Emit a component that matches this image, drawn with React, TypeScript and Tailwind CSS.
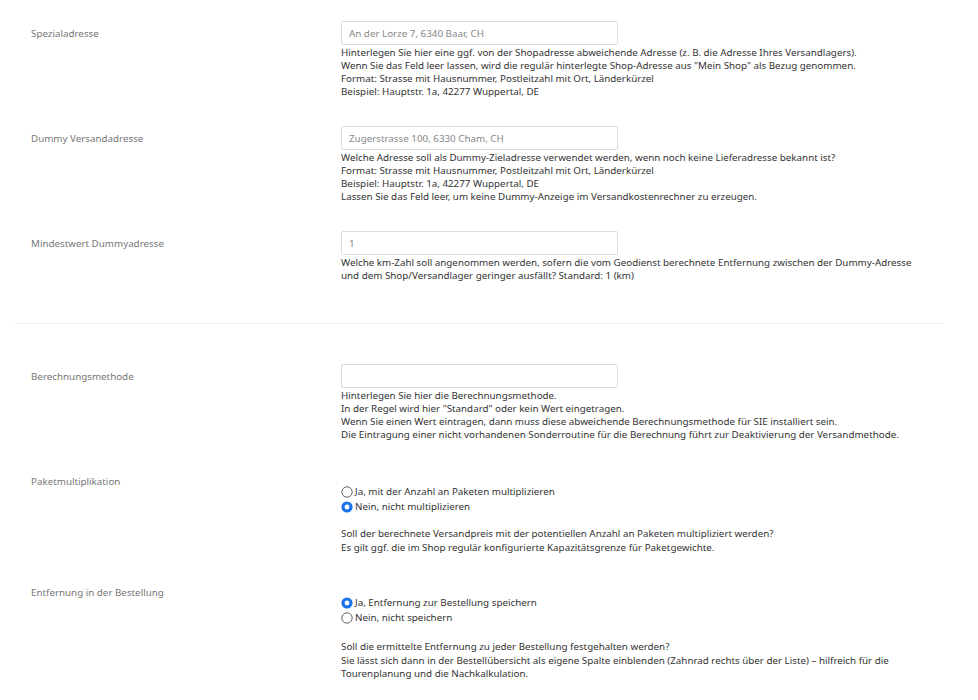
import React from "react";

const Radio = ({ checked }: { checked: boolean }) => (
  <span className="inline-flex w-[12px] h-[12px] shrink-0 items-center justify-center">
    {checked ? (
      <svg width="12" height="12" viewBox="0 0 12 12">
        <circle cx="6" cy="6" r="5.6" fill="#1a73e8" />
        <circle cx="6" cy="6" r="2.4" fill="#ffffff" />
      </svg>
    ) : (
      <svg width="12" height="12" viewBox="0 0 12 12">
        <circle cx="6" cy="6" r="5.2" fill="#ffffff" stroke="#555" strokeWidth="0.9" />
      </svg>
    )}
  </span>
);

const Desc = ({ lines }: { lines: string[] }) => (
  <>
    {lines.map((d, i) => (
      <div key={i}>{d}</div>
    ))}
  </>
);

const InputRow = ({ label, value, desc }: { label: string; value: string; desc: string[] }) => (
  <div className="flex">
    <div className="w-[341px] shrink-0 pl-[31px] h-[24px] flex items-center text-[#777]">{label}</div>
    <div className="flex flex-col">
      <div className="w-[277px] h-[24px] border border-[#dcdcdc] rounded-[2px] flex items-center px-[7px] text-[#888]">
        {value}
      </div>
      <div className="mt-[1px] text-[#333]">
        <Desc lines={desc} />
      </div>
    </div>
  </div>
);

const RadioRow = ({
  label,
  options,
  desc,
  descGap,
}: {
  label: string;
  options: { text: string; checked: boolean }[];
  desc: string[];
  descGap: "a" | "b";
}) => (
  <div className="flex">
    <div className="w-[341px] shrink-0 pl-[31px] h-[24px] flex items-center text-[#777]">{label}</div>
    <div className="flex flex-col pt-[15px] text-[#333]">
      {options.map((o, i) => (
        <div key={i} className="flex items-center gap-[2px] h-[15px]">
          <Radio checked={o.checked} />
          <span>{o.text}</span>
        </div>
      ))}
      <div className={descGap === "a" ? "mt-[13px] leading-[13.5px]" : "mt-[15px] leading-[13.5px]"}>
        <Desc lines={desc} />
      </div>
    </div>
  </div>
);

export default function App() {
  return (
    <div
      className="w-[978px] h-[700px] bg-white text-[9.8px] leading-[13px] overflow-hidden"
      style={{ fontFamily: '"Noto Sans", "Open Sans", sans-serif' }}
    >
      <div className="flex flex-col pt-[21px]">
        <InputRow
          label="Spezialadresse"
          value="An der Lorze 7, 6340 Baar, CH"
          desc={[
            "Hinterlegen Sie hier eine ggf. von der Shopadresse abweichende Adresse (z. B. die Adresse Ihres Versandlagers).",
            'Wenn Sie das Feld leer lassen, wird die regulär hinterlegte Shop-Adresse aus "Mein Shop" als Bezug genommen.',
            "Format: Strasse mit Hausnummer, Postleitzahl mit Ort, Länderkürzel",
            "Beispiel: Hauptstr. 1a, 42277 Wuppertal, DE",
          ]}
        />
        <div className="h-[28px]" />
        <InputRow
          label="Dummy Versandadresse"
          value="Zugerstrasse 100, 6330 Cham, CH"
          desc={[
            "Welche Adresse soll als Dummy-Zieladresse verwendet werden, wenn noch keine Lieferadresse bekannt ist?",
            "Format: Strasse mit Hausnummer, Postleitzahl mit Ort, Länderkürzel",
            "Beispiel: Hauptstr. 1a, 42277 Wuppertal, DE",
            "Lassen Sie das Feld leer, um keine Dummy-Anzeige im Versandkostenrechner zu erzeugen.",
          ]}
        />
        <div className="h-[28px]" />
        <InputRow
          label="Mindestwert Dummyadresse"
          value="1"
          desc={[
            "Welche km-Zahl soll angenommen werden, sofern die vom Geodienst berechnete Entfernung zwischen der Dummy-Adresse",
            "und dem Shop/Versandlager geringer ausfällt? Standard: 1 (km)",
          ]}
        />
        <div className="h-[41px]" />
        <div className="mx-[14px] w-[929px] h-px bg-[#f0f0f0]" />
        <div className="h-[40px]" />
        <InputRow
          label="Berechnungsmethode"
          value=""
          desc={[
            "Hinterlegen Sie hier die Berechnungsmethode.",
            'In der Regel wird hier "Standard" oder kein Wert eingetragen.',
            "Wenn Sie einen Wert eintragen, dann muss diese abweichende Berechnungsmethode für SIE installiert sein.",
            "Die Eintragung einer nicht vorhandenen Sonderroutine für die Berechnung führt zur Deaktivierung der Versandmethode.",
          ]}
        />
        <div className="h-[28px]" />
        <RadioRow
          label="Paketmultiplikation"
          descGap="a"
          options={[
            { text: "Ja, mit der Anzahl an Paketen multiplizieren", checked: false },
            { text: "Nein, nicht multiplizieren", checked: true },
          ]}
          desc={[
            "Soll der berechnete Versandpreis mit der potentiellen Anzahl an Paketen multipliziert werden?",
            "Es gilt ggf. die im Shop regulär konfigurierte Kapazitätsgrenze für Paketgewichte.",
          ]}
        />
        <div className="h-[26px]" />
        <RadioRow
          label="Entfernung in der Bestellung"
          descGap="b"
          options={[
            { text: "Ja, Entfernung zur Bestellung speichern", checked: true },
            { text: "Nein, nicht speichern", checked: false },
          ]}
          desc={[
            "Soll die ermittelte Entfernung zu jeder Bestellung festgehalten werden?",
            "Sie lässt sich dann in der Bestellübersicht als eigene Spalte einblenden (Zahnrad rechts über der Liste) – hilfreich für die",
            "Tourenplanung und die Nachkalkulation.",
          ]}
        />
      </div>
    </div>
  );
}
